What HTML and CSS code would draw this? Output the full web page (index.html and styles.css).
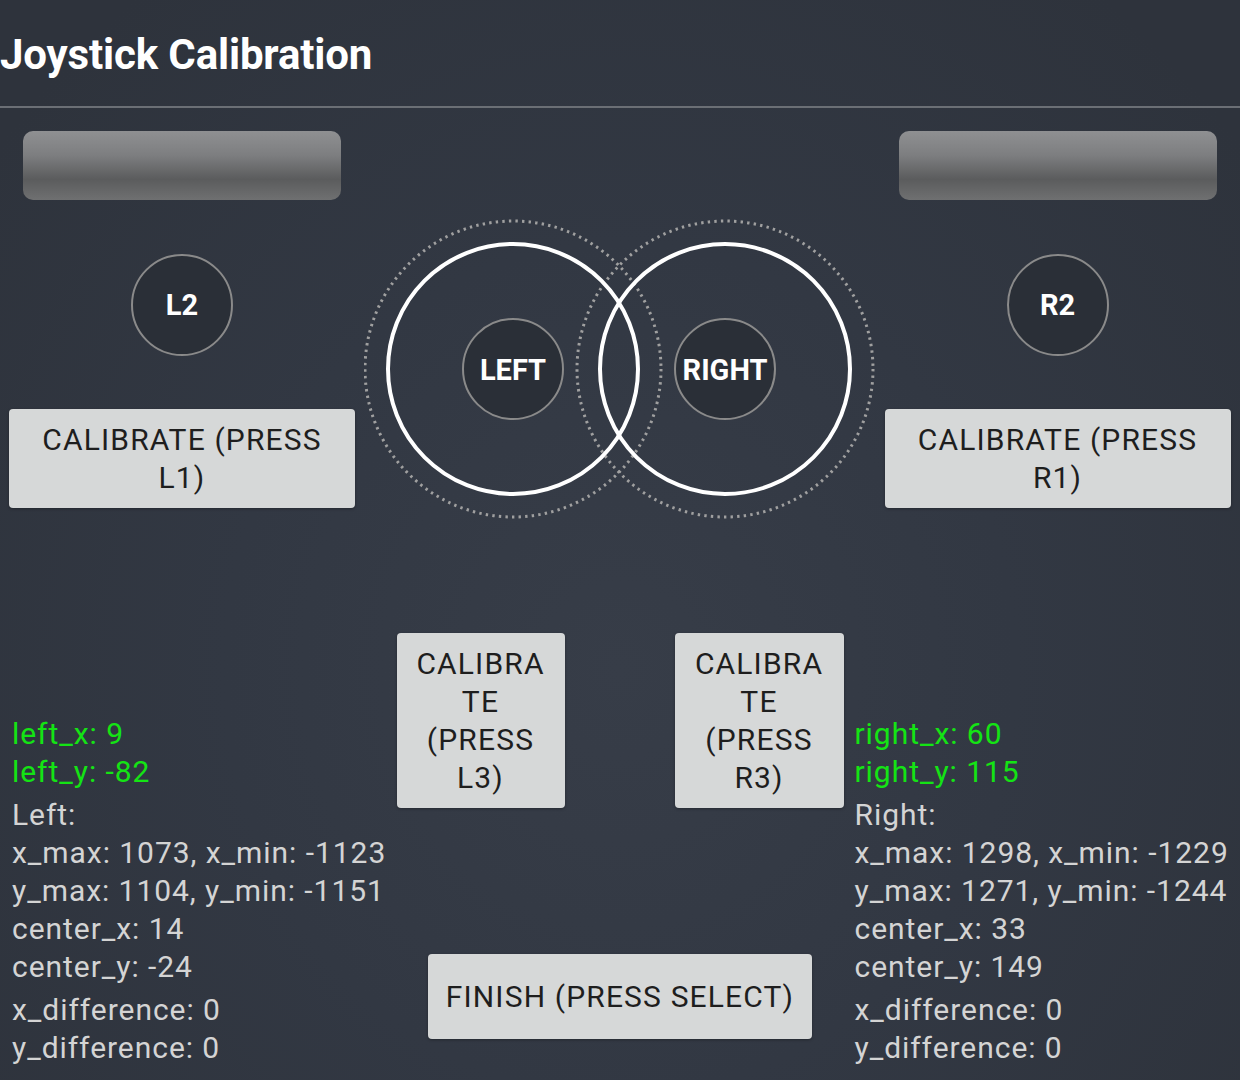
FILE: index.html
```html
<!doctype html>
<html lang="en">
  <head>
    <meta charset="UTF-8" />
    <meta name="viewport" content="width=device-width, initial-scale=1.0" />
    <title>Joystick Calibration</title>
    <link rel="stylesheet" href="styles.css">
  </head>
  <body>
    <header class="header">
      <h1>Joystick Calibration</h1>
    </header>

    <main class="pad">
      <!-- triggers, shoulder buttons and both sticks -->
      <section class="top">
        <div class="side">
          <div class="trigger-bar"></div>
          <div class="btn-circle">L2</div>
          <button class="calib wide">CALIBRATE (PRESS L1)</button>
        </div>

        <div class="sticks">
          <svg width="511" height="300" viewBox="0 0 511 300">
            <g fill="none">
              <circle class="range" cx="149" cy="150" r="148" />
              <circle class="range" cx="361" cy="150" r="148" />
              <circle class="ring" cx="149" cy="150" r="125" />
              <circle class="ring" cx="361" cy="150" r="125" />
            </g>
            <circle class="knob" cx="149" cy="150" r="50" />
            <circle class="knob" cx="361" cy="150" r="50" />
            <text class="knob-label" x="149" y="151">LEFT</text>
            <text class="knob-label" x="361" y="151">RIGHT</text>
          </svg>
        </div>

        <div class="side">
          <div class="trigger-bar"></div>
          <div class="btn-circle">R2</div>
          <button class="calib wide">CALIBRATE (PRESS R1)</button>
        </div>
      </section>

      <!-- stick buttons, readouts and finish -->
      <section class="bottom">
        <div class="stats stats-left">
          <p class="live">left_x: 9<br>left_y: -82</p>
          <p>Left:<br>x_max: 1073, x_min: -1123<br>y_max: 1104, y_min: -1151<br>center_x: 14<br>center_y: -24</p>
          <p>x_difference: 0<br>y_difference: 0</p>
        </div>

        <button class="calib narrow l3">CALIBRATE (PRESS L3)</button>
        <button class="calib narrow r3">CALIBRATE (PRESS R3)</button>

        <div class="stats stats-right">
          <p class="live">right_x: 60<br>right_y: 115</p>
          <p>Right:<br>x_max: 1298, x_min: -1229<br>y_max: 1271, y_min: -1244<br>center_x: 33<br>center_y: 149</p>
          <p>x_difference: 0<br>y_difference: 0</p>
        </div>

        <button class="calib finish">FINISH (PRESS SELECT)</button>
      </section>
    </main>
  </body>
</html>
```

FILE: styles.css
```css
html {
  background: #30353f;
}
body {
  margin: 0;
  min-height: 1080px;
  font-family: Roboto, "Liberation Sans", sans-serif;
  color: #d4d4d4;
  background: radial-gradient(ellipse at 50% 62%, #373d48 0%, #323843 45%, #2e333c 90%);
}
.header {
  padding: 30px 0 26px;
  border-bottom: 2px solid #6b6f75;
}
.header h1 {
  margin: 0;
  font-size: 42px;
  line-height: 50px;
  font-weight: 700;
  letter-spacing: -0.15px;
  color: #ffffff;
}

.top {
  display: grid;
  grid-template-columns: 364px 1fr 365px;
  align-items: start;
}
.side {
  display: flex;
  flex-direction: column;
  align-items: center;
}
.trigger-bar {
  width: 318px;
  height: 69px;
  margin-top: 23px;
  border-radius: 10px;
  background: linear-gradient(#8f9092 0%, #7d7e80 35%, #5b5c5d 70%, #6f7071 100%);
}
.btn-circle {
  box-sizing: border-box;
  width: 102px;
  height: 102px;
  margin-top: 54px;
  border: 2px solid #8a8a8a;
  border-radius: 50%;
  background: #2a2f37;
  color: #ffffff;
  font-size: 29px;
  font-weight: 700;
  display: flex;
  align-items: center;
  justify-content: center;
}

.calib {
  box-sizing: border-box;
  border: none;
  border-radius: 4px;
  background: #d6d8d8;
  color: #1e1e1e;
  font-family: inherit;
  font-size: 30px;
  line-height: 38px;
  letter-spacing: 1.15px;
  text-align: center;
  padding: 0 16px;
  box-shadow: 0 1px 3px rgba(0, 0, 0, 0.3);
}
.calib.wide {
  width: 346px;
  height: 99px;
  margin-top: 53px;
}

.sticks {
  display: flex;
  justify-content: center;
  padding-top: 111px;
}
.sticks svg {
  display: block;
}
.range {
  stroke: #a0a0a0;
  stroke-width: 3;
  stroke-dasharray: 2.4 4.2;
}
.ring {
  stroke: #ffffff;
  stroke-width: 4;
}
.knob {
  fill: #2a2f37;
  stroke: #8a8a8a;
  stroke-width: 2;
}
.knob-label {
  fill: #ffffff;
  font-family: Roboto, "Liberation Sans", sans-serif;
  font-size: 29px;
  font-weight: 700;
  text-anchor: middle;
  dominant-baseline: central;
}

.bottom {
  display: grid;
  grid-template-columns: 1fr 168px 110px 169px 1fr;
  grid-template-rows: 175px auto;
  margin-top: 114px;
}
.calib.narrow {
  height: 175px;
  overflow-wrap: anywhere;
}
.l3 {
  grid-column: 2;
  grid-row: 1;
}
.r3 {
  grid-column: 4;
  grid-row: 1;
}
.finish {
  grid-column: 2 / 5;
  grid-row: 2;
  justify-self: center;
  align-self: start;
  width: 384px;
  height: 85px;
  margin-top: 146px;
}

.stats {
  grid-row: 1 / 3;
  padding-top: 82px;
  font-size: 30px;
  line-height: 38px;
  letter-spacing: 0.95px;
  white-space: nowrap;
}
.stats p {
  margin: 0 0 5px;
}
.stats-left {
  grid-column: 1;
  padding-left: 12px;
}
.stats-right {
  grid-column: 5;
  padding-left: 11px;
}
.live {
  color: #14e414;
}
```
